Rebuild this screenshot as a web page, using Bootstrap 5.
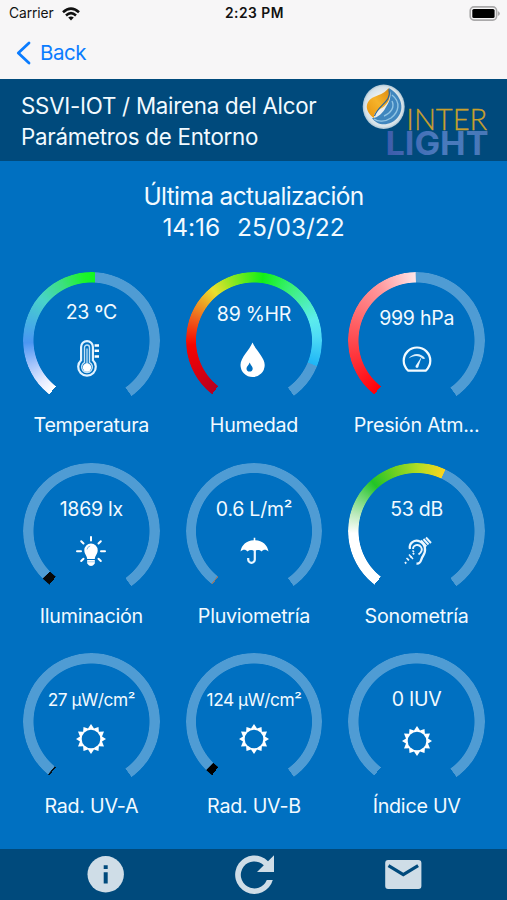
<!DOCTYPE html>
<html lang="es">
<head>
<meta charset="utf-8">
<meta name="viewport" content="width=device-width, initial-scale=1">
<title>SSVI-IOT</title>
<link href="https://cdn.jsdelivr.net/npm/bootstrap@5.3.0/dist/css/bootstrap.min.css" rel="stylesheet">
<style>
  body { font-family: Inter, "Liberation Sans", sans-serif; background: #0070c1; color: #f2faff; height: 900px; overflow: hidden; }
  svg { display: block; flex: none; overflow: visible; }
  .topbar { height: 79px; background: #f7f6f7; color: #111; }
  .statusbar { height: 27px; padding: 0 7px 0 9px; font-size: 13.8px; letter-spacing: -.1px; }
  .statusbar > * { flex: 1 1 0; }
  .clock { font-weight: 600; letter-spacing: .5px; }
  .back { color: #0a7cff; text-decoration: none; font-size: 20.5px; letter-spacing: -.5px; padding: 12px 0 0 16px; line-height: 28px; gap: 9px; }
  .titlebar { height: 82px; background: #004a7c; padding: 0 19px 0 21px; }
  .titlebar h1 { font-size: 22.3px; line-height: 31px; letter-spacing: -.24px; font-weight: 400; padding-top: 1px; }
  .updated { padding-top: 20px; font-size: 24.5px; line-height: 30.5px; letter-spacing: -.63px; height: 111px; }
  .updated .stamp { letter-spacing: -.05px; word-spacing: -1.2px; }
  .gauges { padding: 0 9px 0 10px; }
  .sensor { height: 190.6px; }
  .dial { width: 136.6px; height: 136.6px; }
  .dial > * { grid-area: 1 / 1; }
  .ring { border-radius: 50%; --rest: rgba(255,255,255,.31);
    -webkit-mask: radial-gradient(circle closest-side, transparent 57.6px, #000 58.4px);
    mask: radial-gradient(circle closest-side, transparent 57.6px, #000 58.4px); }
  .ring-temp { background: conic-gradient(from 218deg, #fff 0, #e4ebff 12deg, #a3c3fb 30deg, #4a96f2 50deg, #46b0e4 68deg, #49d3c9 92deg, #3ce07e 115deg, #1cf52c 135deg, #10f820 145deg, var(--rest) 145.4deg 286deg, transparent 286.4deg); }
  .ring-hum { background: conic-gradient(from 218deg, #b50022 0, #d80010 22deg, #f50400 48deg, #f0601c 72deg, #ece02e 103deg, #8de822 122deg, #12ef16 150deg, #3df07c 178deg, #5cecec 212deg, #4fdcf6 228deg, #1fb6f6 254deg, var(--rest) 254.4deg 286deg, transparent 286.4deg); }
  .ring-pres { background: conic-gradient(from 218deg, #ff0008 0, #ff1c24 20deg, #ff6468 70deg, #ff9a9e 108deg, #ffe4e6 141deg, var(--rest) 141.4deg 286deg, transparent 286.4deg); }
  .ring-lux { background: conic-gradient(from 218deg, #080808 7.6deg, var(--rest) 8deg 286deg, transparent 286.4deg); }
  .ring-rain { background: conic-gradient(from 218deg, #8a7a74 .8deg, var(--rest) 1.2deg 286deg, transparent 286.4deg); }
  .ring-snd { background: conic-gradient(from 218deg, #fff 50deg, #b9e9b9 68deg, #22c428 100deg, #6fd022 122deg, #b6dd22 145deg, #fbd41e 167deg, var(--rest) 167.4deg 286deg, transparent 286.4deg); }
  .ring-uva { background: conic-gradient(from 218deg, #061018 1.2deg, var(--rest) 1.6deg 286deg, transparent 286.4deg); }
  .ring-uvb { background: conic-gradient(from 218deg, #000 6.4deg, var(--rest) 6.8deg 286deg, transparent 286.4deg); }
  .ring-iuv { background: conic-gradient(from 218deg, var(--rest) 286deg, transparent 286.4deg); }
  .reading { height: 66px; padding-top: 34px; font-size: 19.5px; line-height: 24px; letter-spacing: -.25px; white-space: nowrap; }
  .reading.high { padding-top: 28px; }
  .reading.mid { padding-top: 30px; }
  .reading.tight { font-size: 17.3px; height: 63.5px; letter-spacing: -.45px; padding-top: 34.500px; }
  .caption-line { font-size: 19.7px; line-height: 28px; padding-top: 2.500px; letter-spacing: -.25px; white-space: nowrap; }
  .toolbar { height: 51px; background: #004a7c; }
</style>
<script src="https://cdn.jsdelivr.net/npm/bootstrap@5.3.0/dist/js/bootstrap.bundle.min.js"></script>
</head>
<body class="d-flex flex-column">
<svg width="0" height="0" class="position-absolute">
  <defs>
    <symbol id="sun" viewBox="-22 -22 44 44">
      <path fill="#fff" d="M0-15 3-10.5 7.5-12.1 7.9-7.3 13-7.5 11-2.5 15 0 11 2.5 13 7.5 7.9 7.3 7.5 12.1 3 10.5 0 15-3 10.5-7.5 12.1-7.9 7.3-13 7.5-11 2.5-15 0-11-2.5-13-7.5-7.9-7.3-7.5-12.1-3-10.5Z"/>
      <circle r="9.300" fill="#0070c1"/>
    </symbol>
  </defs>
</svg>

<header class="topbar">
  <div class="statusbar d-flex align-items-center">
    <div class="d-flex align-items-center gap-2"><span>Carrier</span>
      <svg width="18" height="14" viewBox="0 0 18 14" fill="none" stroke="#111" stroke-width="2.600"><path d="M1 5.200Q9-2 17 5.200"/><path d="M4 8.400Q9 4 14 8.400"/><path d="M6.200 10.600Q9 8.600 11.800 10.600L9 13.600Z" fill="#111" stroke="none"/></svg>
    </div>
    <div class="clock text-center">2:23 PM</div>
    <div class="d-flex justify-content-end">
      <svg width="31" height="15" viewBox="0 0 31 15"><rect x="1.200" y=".9" width="26.400" height="13.200" rx="3.800" fill="#f7f6f7" stroke="#aaa9aa" stroke-width="1.600"/><rect x="3.300" y="3" width="22.300" height="9" rx="1.600" fill="#000"/><path d="M28.900 5v5q2-1 2-2.500T28.900 5Z" fill="#aaa9aa"/></svg>
    </div>
  </div>
  <a class="back d-flex align-items-center" href="#">
    <svg width="15" height="24" viewBox="0 0 15 24" fill="none" stroke="#0a7cff" stroke-width="2.800" stroke-linecap="round" stroke-linejoin="round"><path d="M13 2 2.300 12 13 22"/></svg>
    <span>Back</span>
  </a>
</header>

<div class="titlebar d-flex align-items-center justify-content-between">
  <h1 class="m-0 text-nowrap">SSVI-IOT / Mairena del Alcor<br>Parámetros de Entorno</h1>
  <svg width="127" height="78" viewBox="360 81 127 78">
    <defs>
      <linearGradient id="lt" gradientUnits="userSpaceOnUse" x1="386" y1="150" x2="487" y2="135"><stop offset="0" stop-color="#3d5cab"/><stop offset=".5" stop-color="#4a7abd"/><stop offset="1" stop-color="#4878b8"/></linearGradient>
      <radialGradient id="orb"><stop offset=".6" stop-color="#e9eef0"/><stop offset=".9" stop-color="#d5e2e8"/><stop offset="1" stop-color="#a9c3d3"/></radialGradient>
      <linearGradient id="fl" x1="0" y1="1" x2="1" y2="0"><stop offset="0" stop-color="#e8930e"/><stop offset=".5" stop-color="#f6b32a"/><stop offset="1" stop-color="#d98a12"/></linearGradient>
    </defs>
    <ellipse cx="382.700" cy="106.700" rx="21" ry="22.200" fill="url(#orb)"/>
    <path d="M388 88C400 95 404 108 397 117 390 126 377 127 371 118 377 118 382 113 385 107 389 101 391 95 388 88Z" fill="#3f86be"/>
    <path d="M391 95C400 102 398 112 390 118 384 122 377 122 373 119M391 101C394 107 390 113 383 116" fill="none" stroke="#8fc4e4" stroke-width="1.400"/>
    <path d="M387.500 88C391 98 387 104 381 108 375 111 373 113 373 118 363 111 364 101 373 97 380 94 384 93 387.500 88Z" fill="url(#fl)"/>
    <path d="M388 89C391 102 378 104 373.500 116" fill="none" stroke="#28659d" stroke-width="1.200"/>
    <text x="405.300" y="129.500" font-family="Lato, sans-serif" font-weight="300" font-size="30" fill="#c9a02d" stroke="#c9a02d" stroke-width=".3" textLength="81" lengthAdjust="spacingAndGlyphs">INTER</text>
    <text x="384.500" y="155" font-family="Inter, sans-serif" font-weight="700" font-size="32.500" fill="url(#lt)" textLength="103" lengthAdjust="spacingAndGlyphs">LIGHT</text>
  </svg>
</div>

<main class="flex-grow-1">
  <div class="updated text-center">Última actualización<br><span class="stamp">14:16&nbsp;&nbsp; 25/03/22</span></div>
  <div class="gauges row row-cols-3 g-0">
    <div class="col sensor d-flex flex-column align-items-center">
      <div class="dial d-grid"><div class="ring ring-temp"></div>
        <div class="d-flex flex-column align-items-center"><div class="reading high">23 ºC</div>
          <svg width="44" height="44" viewBox="-22 -21.500 44 44" fill="none"><path d="M-9.900-1.500V-12.500a5.900 5.900 0 0 1 11.800 0V.8a8.800 8.800 0 1 1-11.800 0Z" stroke="#e2f3ff" stroke-width="2.200"/><path d="M-6.500 2.800V-12a2.500 2.500 0 0 1 5 0V2.800a5.400 5.400 0 1 1-5 0Z" stroke="#c4e2f6" stroke-width="1.400"/><path d="M-4-11V6" stroke="#a9d4f1" stroke-width="1.500"/><circle cx="-4" cy="8" r="4.200" fill="#fff"/><path d="M3.600-14H8M3.600-8.700H8M3.600-3H8" stroke="#fff" stroke-width="2.400"/></svg>
        </div></div>
      <div class="caption-line">Temperatura</div>
    </div>
    <div class="col sensor d-flex flex-column align-items-center">
      <div class="dial d-grid"><div class="ring ring-hum"></div>
        <div class="d-flex flex-column align-items-center"><div class="reading mid">89 %HR</div>
          <svg width="44" height="44" viewBox="-22.500 -22 44 44"><path fill="#fff" d="M-2-17.500C1-10 10.200-2.500 10.200 5a12.100 12.100 0 0 1-24.200 0C-14-2.500-5-10-2-17.500Z"/><path fill="#0070c1" d="M-4.800 2.500C-4 5-1.800 6.600-1.800 8.500a3.100 3.100 0 0 1-6.200 0C-8 6.600-5.600 5-4.800 2.500Z"/></svg>
        </div></div>
      <div class="caption-line">Humedad</div>
    </div>
    <div class="col sensor d-flex flex-column align-items-center">
      <div class="dial d-grid"><div class="ring ring-pres"></div>
        <div class="d-flex flex-column align-items-center"><div class="reading">999 hPa</div>
          <svg width="44" height="44" viewBox="-22 -22 44 44" fill="none"><path d="M-9 10.600H9C12 7.500 13.300 4 13.300.8a13.300 13.300 0 0 0-26.600 0C-13.300 4-12 7.500-9 10.600Z" stroke="#f4fbff" stroke-width="2.200" stroke-linejoin="round"/><path d="M-8.500-1.500C-4-7.500 4-7.500 8.300-1.500L6-1C2.500-5-3.500-5-8.500-1.500Z" fill="#d9eefb"/><path d="M4.800-3.500 1.500 6.200A1.500 1.500 0 1 1-1 5.300Z" fill="#e8f6ff"/></svg>
        </div></div>
      <div class="caption-line">Presión Atm...</div>
    </div>

    <div class="col sensor d-flex flex-column align-items-center">
      <div class="dial d-grid"><div class="ring ring-lux"></div>
        <div class="d-flex flex-column align-items-center"><div class="reading">1869 lx</div>
          <svg width="44" height="44" viewBox="-22 -22 44 44"><path fill="#fff" d="M0-7.500a6.700 6.700 0 0 1 6.700 6.700C6.700 3 4 4.500 3.800 8H-3.800C-4 4.500-6.700 3-6.700-.8A6.700 6.700 0 0 1 0-7.500ZM-3.800 9H3.800V12.500Q2 15 0 15-2 15-3.800 12.500Z"/><path d="M-4-1.500Q-3.500-4.500-.8-5" fill="none" stroke="#7db9e4"/><path d="M-3.500 10.800H3.500" stroke="#7db9e4" stroke-width=".7"/><path stroke="#fff" stroke-width="2" stroke-linecap="round" d="M0-14V-10.500M-9.800-9.800-7.500-7.500M9.800-9.800 7.500-7.500M-14 .2H-10M14 .2H10M-9.800 10-7.500 7.700M9.800 10 7.500 7.700"/></svg>
        </div></div>
      <div class="caption-line">Iluminación</div>
    </div>
    <div class="col sensor d-flex flex-column align-items-center">
      <div class="dial d-grid"><div class="ring ring-rain"></div>
        <div class="d-flex flex-column align-items-center"><div class="reading">0.6 L/m²</div>
          <svg width="44" height="44" viewBox="-22.500 -22 44 44"><path fill="#fff" d="M-.8-13.200H.8V-10.800C8-10.500 13-6 14 .5 11.500-1.700 9-1.700 7 .5 5-1.300 2.500-1.500 0 .2-2.500-1.500-5-1.300-7 .5-9-1.700-11.500-1.700-14 .5-13-6-8-10.500-.8-10.800Z"/><path d="M.3-1V8.500a3.300 3.300 0 0 1-6.600 0V7" fill="none" stroke="#e8f6ff" stroke-width="2.200"/></svg>
        </div></div>
      <div class="caption-line">Pluviometría</div>
    </div>
    <div class="col sensor d-flex flex-column align-items-center">
      <div class="dial d-grid"><div class="ring ring-snd"></div>
        <div class="d-flex flex-column align-items-center"><div class="reading">53 dB</div>
          <svg width="44" height="44" viewBox="-22.500 -22 44 44" fill="none" stroke="#eaf6ff" stroke-width="2.300"><path d="M-7.500-2C-9-8-3-12 2.500-9.500 8-7 9 0 5.500 5 3 8.500 4 13-1 12.500"/><path d="M-4.500-2C-4.500-6 1-7.500 3.500-4 5.500-1 3 2 1 3.500" stroke-width="1.800"/><path d="M3.500-10.500 8.800-4.500M6-12 11-6.500M8.500-13.500 13.500-8" stroke-width="1.900"/><path d="M-12.500 12.500-2 .5" stroke-width="1.900" stroke-dasharray="1.800 2.200"/><path d="M-8.500 3.500-4.500 8M-11 7-9.500 8.500M-5-.5-3.500 1" stroke-width="1.500"/></svg>
        </div></div>
      <div class="caption-line">Sonometría</div>
    </div>

    <div class="col sensor d-flex flex-column align-items-center">
      <div class="dial d-grid"><div class="ring ring-uva"></div>
        <div class="d-flex flex-column align-items-center"><div class="reading tight">27 µW/cm²</div><svg width="44" height="44"><use href="#sun"/></svg></div></div>
      <div class="caption-line">Rad. UV-A</div>
    </div>
    <div class="col sensor d-flex flex-column align-items-center">
      <div class="dial d-grid"><div class="ring ring-uvb"></div>
        <div class="d-flex flex-column align-items-center"><div class="reading tight">124 µW/cm²</div><svg width="44" height="44"><use href="#sun"/></svg></div></div>
      <div class="caption-line">Rad. UV-B</div>
    </div>
    <div class="col sensor d-flex flex-column align-items-center">
      <div class="dial d-grid"><div class="ring ring-iuv"></div>
        <div class="d-flex flex-column align-items-center"><div class="reading">0 IUV</div><svg width="44" height="44"><use href="#sun"/></svg></div></div>
      <div class="caption-line">Índice UV</div>
    </div>
  </div>
</main>

<footer class="toolbar d-flex justify-content-center">
  <svg width="370" height="51" viewBox="68.500 849 370 51" fill="#cfdde7">
    <circle cx="105.200" cy="874.300" r="18.200"/><path fill="#004a7c" d="M103.200 865.300h4v3.800h-4ZM103.200 872.300h4v11.200h-4Z"/>
    <path d="M267.500 861.200A19.200 19.200 0 1 0 272.300 880H266.300A13.500 13.500 0 1 1 263.300 865.300L256.500 872H273.500V855.200Z"/>
    <rect x="384.700" y="860" width="36.200" height="29" rx="3"/><path d="M388 865.600 402.800 874.600 417.600 865.600" fill="none" stroke="#004a7c" stroke-width="3.200"/>
  </svg>
</footer>
</body>
</html>
